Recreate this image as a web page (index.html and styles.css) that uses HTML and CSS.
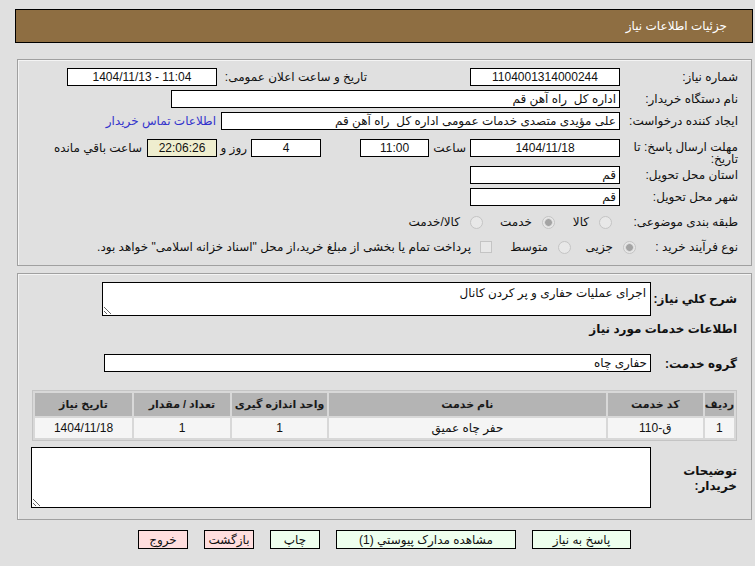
FILE: index.html
```html
<!DOCTYPE html>
<html lang="fa" dir="rtl">

<head>
    <meta charset="utf-8">
    <title>جزئیات اطلاعات نیاز</title>
    <link rel="stylesheet" href="styles.css">
</head>

<body>
    <div class="page">
        <div class="title-bar">جزئیات اطلاعات نیاز</div>

        <div class="panel panel-info">
            <div class="row">
                <span class="lbl">شماره نیاز:</span>
                <span class="box w150 center">1104001314000244</span>
                <span class="lbl-announce">تاریخ و ساعت اعلان عمومی:</span>
                <span class="box w150 center" dir="ltr">1404/11/13 - 11:04</span>
            </div>
            <div class="row">
                <span class="lbl">نام دستگاه خریدار:</span>
                <span class="box w449">اداره کل  راه آهن قم</span>
            </div>
            <div class="row">
                <span class="lbl">ایجاد کننده درخواست:</span>
                <span class="box w399">علی مؤیدی متصدی خدمات عمومی اداره کل  راه آهن قم</span>
                <a class="contact-link" href="#">اطلاعات تماس خریدار</a>
            </div>
            <div class="row row-deadline">
                <span class="lbl lbl-wrap">مهلت ارسال پاسخ: تا تاریخ:</span>
                <span class="box w150 center">1404/11/18</span>
                <span class="unit unit-hour">ساعت</span>
                <span class="box w69 center">11:00</span>
                <span class="box w70 center gap-days">4</span>
                <span class="unit unit-days">روز و</span>
                <span class="box w70 center remain">22:06:26</span>
                <span class="unit unit-left">ساعت باقي مانده</span>
            </div>
            <div class="row row-province">
                <span class="lbl">استان محل تحویل:</span>
                <span class="box w150">قم</span>
            </div>
            <div class="row">
                <span class="lbl">شهر محل تحویل:</span>
                <span class="box w150">قم</span>
            </div>
            <div class="row row-choice row-category">
                <span class="lbl">طبقه بندی موضوعی:</span>
                <div class="choices">
                    <span class="opt opt-goods"><i class="radio"></i>کالا</span>
                    <span class="opt opt-service"><i class="radio checked"></i>خدمت</span>
                    <span class="opt"><i class="radio"></i>کالا/خدمت</span>
                </div>
            </div>
            <div class="row row-choice row-process">
                <span class="lbl lbl-process">نوع فرآیند خرید :</span>
                <span class="opt opt-small"><i class="radio checked"></i>جزیی</span>
                <span class="opt opt-medium"><i class="radio"></i>متوسط</span>
                <span class="opt opt-check"><i class="check"></i>پرداخت تمام یا بخشی از مبلغ خرید،از محل "اسناد خزانه اسلامی" خواهد بود.</span>
            </div>
        </div>

        <div class="panel panel-desc">
            <div class="row row-summary">
                <span class="lbl-bold">شرح کلي نیاز:</span>
                <textarea class="text-area summary" readonly>اجرای عملیات حفاری و پر کردن کانال</textarea>
            </div>
            <div class="section-title">اطلاعات خدمات مورد نیاز</div>
            <div class="row row-group">
                <span class="lbl-bold">گروه خدمت:</span>
                <span class="box w547">حفاری چاه</span>
            </div>

            <table class="items">
                <thead>
                    <tr>
                        <th class="c-row">ردیف</th>
                        <th class="c-code">کد خدمت</th>
                        <th>نام خدمت</th>
                        <th class="c-unit">واحد اندازه گیری</th>
                        <th class="c-qty">تعداد / مقدار</th>
                        <th class="c-date">تاریخ نیاز</th>
                    </tr>
                </thead>
                <tbody>
                    <tr>
                        <td>1</td>
                        <td>ق-110</td>
                        <td>حفر چاه عمیق</td>
                        <td>1</td>
                        <td>1</td>
                        <td>1404/11/18</td>
                    </tr>
                </tbody>
            </table>

            <div class="row row-notes">
                <span class="lbl-bold lbl-notes">توضیحات خریدار:</span>
                <textarea class="text-area notes" readonly></textarea>
            </div>
        </div>

        <div class="actions">
            <button class="btn btn-go btn-reply">پاسخ به نیاز</button>
            <button class="btn btn-go btn-docs">مشاهده مدارک پیوستي (1)</button>
            <button class="btn btn-go">چاپ</button>
            <button class="btn btn-stop">بازگشت</button>
            <button class="btn btn-stop">خروج</button>
        </div>
    </div>
</body>

</html>
```

FILE: styles.css
```css
body {
    margin: 0;
    background-color: #E0E0E0;
    font-family: 'Liberation Sans', 'DejaVu Sans', sans-serif;
    font-size: 12px;
    color: #111;
}

.page {
    width: 738px;
    margin: 9px 2px 0 0;
}

.title-bar {
    height: 32px;
    line-height: 32px;
    padding-right: 25px;
    background-color: #8E6E42;
    border: 1px solid #000;
    color: #fff;
    font-size: 12px;
}

.panel {
    margin: 0 1px 0 2px;
    border: 1px solid #A0A0A0;
    box-shadow: inset 1px 1px 0 #F4F4F4;
}

.panel-info {
    margin-top: 16px;
    height: 189px;
    padding: 8px 13px 8px 0;
}

.row {
    display: flex;
    align-items: center;
    height: 18px;
    margin-top: 4px;
}
.row:first-child {
    margin-top: 0;
}

.lbl {
    width: 118px;
    flex: none;
    white-space: nowrap;
}
.lbl-wrap {
    white-space: normal;
    line-height: 12px;
    padding-top: 2px;
    width: 112px;
    margin-left: 6px;
}
.lbl-announce {
    width: 150px;
    margin-right: 103px;
    flex: none;
}

.box {
    display: block;
    flex: none;
    box-sizing: border-box;
    height: 18px;
    line-height: 16px;
    padding: 0 3px;
    background-color: #fff;
    border: 1px solid #000;
    white-space: pre;
    overflow: hidden;
}
.center { text-align: center; }
.w69 { width: 69px; }
.w70 { width: 70px; }
.w150 { width: 150px; }
.w399 { width: 399px; }
.w449 { width: 449px; }
.w547 { width: 547px; }

.contact-link {
    margin-right: 5px;
    color: #3333CC;
    text-decoration: none;
    white-space: nowrap;
}

.row-deadline {
    align-items: flex-start;
    height: 26px;
    margin-top: 9px;
}
.unit {
    flex: none;
    line-height: 18px;
    white-space: nowrap;
}
.unit-hour {
    width: 37px;
    padding-right: 4px;
}
.gap-days {
    margin-right: 39px;
}
.unit-days {
    width: 30px;
    padding-right: 4px;
}
.remain {
    background-color: #EFEECF;
}
.unit-left {
    padding-right: 5px;
}

.row-province {
    margin-top: 1px;
}

.row-choice {
    height: 20px;
}
.row-category {
    margin-top: 6px;
}
.row-process {
    margin-top: 5px;
}
.choices {
    display: flex;
    margin-right: 8px;
}
.lbl-process {
    width: 102px;
}
.opt {
    display: flex;
    align-items: center;
    flex: none;
    gap: 10px;
    white-space: nowrap;
}
.opt-goods { width: 57px; }
.opt-service { width: 72px; }
.opt-small { width: 65px; }
.opt-medium { width: 79px; }
.opt-check { gap: 9px; }

.radio {
    display: block;
    width: 13px;
    height: 13px;
    box-sizing: border-box;
    border: 1px solid #C4C4C4;
    border-radius: 50%;
    background-color: #E8E8E8;
}
.radio.checked {
    background: radial-gradient(circle, #A4A4A4 0 3px, #C8C8C8 3.5px, #E8E8E8 4.5px);
}
.check {
    display: block;
    width: 12px;
    height: 12px;
    box-sizing: border-box;
    border: 1px solid #C4C4C4;
    background-color: #E8E8E8;
}

.panel-desc {
    margin-top: 7px;
    padding: 8px 14px 11px 13px;
}

.lbl-bold {
    width: 86px;
    flex: none;
    font-weight: bold;
    white-space: nowrap;
}

.text-area {
    display: block;
    box-sizing: border-box;
    margin: 0;
    padding: 2px 4px;
    border: 1px solid #000;
    background-color: #fff;
    font-family: inherit;
    font-size: 12px;
    color: #111;
    resize: both;
}

.row-summary {
    height: 34px;
    margin-top: 0;
}
.summary {
    width: 549px;
    height: 34px;
    padding-top: 3px;
}

.section-title {
    margin-top: 5px;
    height: 16px;
    line-height: 16px;
    font-weight: bold;
}

.row-group {
    margin-top: 17px;
}
.row-group .lbl-bold {
    padding-top: 2px;
}

.items {
    width: 705px;
    margin-top: 18px;
    border: 1px solid #C4C4C4;
    border-spacing: 2px;
    background-color: #D8D8D8;
    text-align: center;
}
.items th {
    height: 23px;
    padding: 0;
    background-color: #B4B4B4;
    font-size: 11px;
    color: #1A1A1A;
}
.items td {
    height: 20px;
    padding: 0;
    background-color: #F5F5F5;
}
.c-row { width: 26px; }
.c-code { width: 95px; }
.c-unit { width: 95px; }
.c-qty { width: 96px; }
.c-date { width: 97px; }

.row-notes {
    height: 61px;
    margin-top: 6px;
}
.lbl-notes {
    white-space: normal;
    width: 60px;
    margin-left: 26px;
    line-height: 15px;
    padding-top: 2px;
}
.notes {
    width: 620px;
    height: 61px;
}

.actions {
    display: flex;
    justify-content: center;
    gap: 16px;
    margin: 10px 0 0 0;
    padding-left: 1px;
}

.btn {
    height: 19px;
    padding: 0;
    border: 1px solid #000;
    font-family: inherit;
    font-size: 12px;
    color: #111;
    width: 50px;
}
.btn-go {
    background-color: #EEFFEE;
}
.btn-stop {
    background-color: #FFDEDE;
}
.btn-reply { width: 99px; }
.btn-docs { width: 180px; }
```
